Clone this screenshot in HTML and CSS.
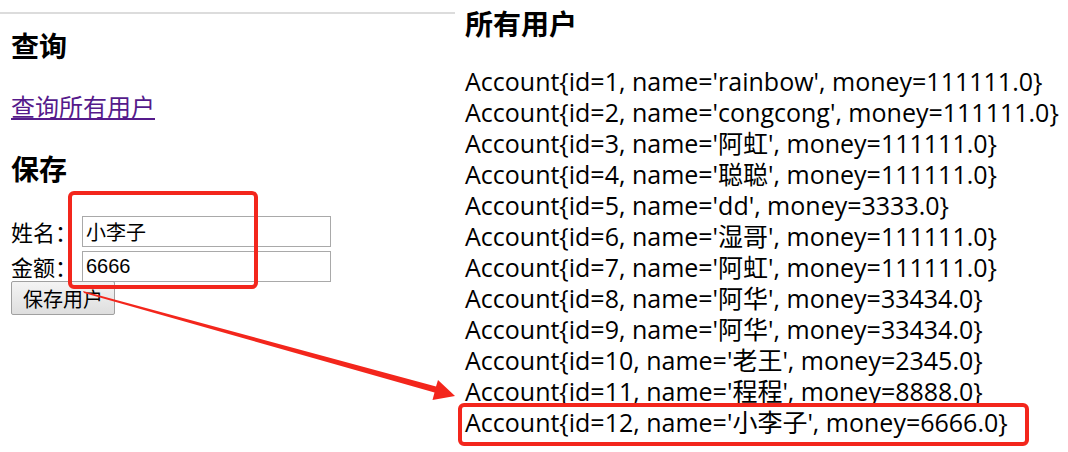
FILE: index.html
```html
<!DOCTYPE html>
<html lang="zh-CN">

<head>
    <meta charset="UTF-8">
    <title>账户</title>
    <link rel="stylesheet" href="styles.css">
</head>

<body>
    <section class="page">
        <div class="leftpane">
            <h3 class="title">查询</h3>
            <p class="linkrow"><a href="#">查询所有用户</a></p>
            <h3 class="title">保存</h3>
            <form class="saveform" action="javascript:;">
                <div class="field">
                    <label>姓名：</label>
                    <input type="text" name="name" value="小李子">
                </div>
                <div class="field">
                    <label>金额：</label>
                    <input type="text" name="money" value="6666">
                </div>
                <input class="savebtn" type="submit" value="保存用户">
            </form>
        </div>
        <div class="rightpane">
            <h3 class="title">所有用户</h3>
            <div class="accountlist">
                <div>Account{id=1, name='rainbow', money=111111.0}</div>
                <div>Account{id=2, name='congcong', money=111111.0}</div>
                <div>Account{id=3, name='阿虹', money=111111.0}</div>
                <div>Account{id=4, name='聪聪', money=111111.0}</div>
                <div>Account{id=5, name='dd', money=3333.0}</div>
                <div>Account{id=6, name='湿哥', money=111111.0}</div>
                <div>Account{id=7, name='阿虹', money=111111.0}</div>
                <div>Account{id=8, name='阿华', money=33434.0}</div>
                <div>Account{id=9, name='阿华', money=33434.0}</div>
                <div>Account{id=10, name='老王', money=2345.0}</div>
                <div>Account{id=11, name='程程', money=8888.0}</div>
                <div>Account{id=12, name='小李子', money=6666.0}</div>
            </div>
        </div>
    </section>

    <!-- red marks drawn over the screenshot -->
    <svg class="marks" width="1068" height="452" viewBox="0 0 1068 452">
        <rect x="70" y="193" width="186" height="94" rx="4" fill="none" stroke="#f3261c" stroke-width="4" />
        <rect x="460" y="405" width="567" height="39" rx="4" fill="none" stroke="#f3261c" stroke-width="4" />
        <polygon fill="#f3261c"
            points="83,291 84,293 434.5,392.5 432.5,400 455,396 438,380 436,386.5" />
    </svg>
</body>

</html>
```

FILE: styles.css
```css
body {
    margin: 0;
    background-color: white;
    color: black;
    font-family: "Liberation Sans", "Noto Sans CJK SC", sans-serif;
}

.page {
    display: flex;
    width: 1068px;
    height: 452px;
    overflow: hidden;
}

.leftpane {
    width: 444px;
    margin-top: 12px;
    padding-left: 11px;
    border-top: 2px solid #dcdcdc;
}

.rightpane {
    padding-left: 10px;
}

.title {
    font-family: "Noto Sans CJK SC", sans-serif;
    font-size: 28px;
    font-weight: bold;
    line-height: 34px;
    margin: 0;
}

.leftpane .title {
    margin-top: 14px;
}

.linkrow {
    margin: 27px 0 28px;
    font-family: "Noto Sans CJK SC", sans-serif;
    font-size: 24px;
    line-height: 34px;
}

.linkrow a {
    color: #551a8b;
}

.saveform {
    display: flex;
    flex-direction: column;
    align-items: flex-start;
    gap: 4px;
    margin-top: 31px;
    font-family: "Noto Sans CJK SC", sans-serif;
    font-size: 22px;
}

.field {
    display: flex;
    align-items: center;
    height: 31px;
}

.field label {
    width: 71px;
    line-height: 31px;
}

.field input {
    box-sizing: border-box;
    width: 249px;
    height: 31px;
    margin: 0;
    padding: 0 3px;
    border: 1px solid #a9a9a9;
    font-family: "Liberation Sans", "Noto Sans CJK SC", sans-serif;
    font-size: 20px;
}

.savebtn {
    box-sizing: border-box;
    width: 104px;
    height: 34px;
    margin: -5px 0 0;
    border: 1px solid #a0a0a0;
    border-radius: 2px;
    background: linear-gradient(#f4f4f4, #dedede);
    font-family: "Noto Sans CJK SC", sans-serif;
    font-size: 20px;
    padding: 0;
}

.rightpane .title {
    margin-top: 6px;
}

.accountlist {
    margin-top: 26px;
    font-family: "Open Sans", "Noto Sans CJK SC", sans-serif;
    font-size: 25px;
    line-height: 31px;
    white-space: nowrap;
}

.marks {
    position: absolute;
    left: 0;
    top: 0;
    pointer-events: none;
}
```
